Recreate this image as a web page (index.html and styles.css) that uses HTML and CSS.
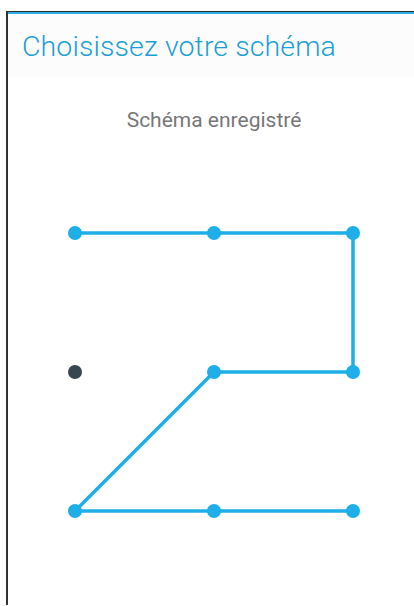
FILE: index.html
```html
<!DOCTYPE html>
<html lang="fr">
<head>
    <meta charset="UTF-8">
    <title>Choisissez votre schéma</title>
    <link rel="stylesheet" href="styles.css">
</head>
<body>
    <div class="frame">
        <header class="top-bar">
            <h1>Choisissez votre schéma</h1>
        </header>

        <main class="content">
            <p class="status">Schéma enregistré</p>

            <!-- 3x3 pattern grid, 139px between dots -->
            <svg class="pattern" width="306" height="306" viewBox="0 0 306 306">
                <polyline points="14,14 153,14 292,14 292,153 153,153 14,292 153,292 292,292"
                          fill="none" stroke="#1eaee8" stroke-width="3.5" stroke-linejoin="miter"/>
                <g fill="#1eaee8">
                    <circle cx="14" cy="14" r="7"/>
                    <circle cx="153" cy="14" r="7"/>
                    <circle cx="292" cy="14" r="7"/>
                    <circle cx="153" cy="153" r="7"/>
                    <circle cx="292" cy="153" r="7"/>
                    <circle cx="14" cy="292" r="7"/>
                    <circle cx="153" cy="292" r="7"/>
                    <circle cx="292" cy="292" r="7"/>
                </g>
                <circle cx="14" cy="153" r="7" fill="#37474f"/>
            </svg>
        </main>
    </div>
</body>
</html>
```

FILE: styles.css
```css
/* Reset */
html, body {
    margin: 0;
    padding: 0;
    background: #ffffff;
    font-family: Roboto, "Noto Sans", sans-serif;
}

/* Outer frame with the dark edges */
.frame {
    margin: 11px 0 0 6px;
    border-top: 1px solid #2b2b2b;
    border-left: 2px solid #333333;
    min-height: 594px;
    box-sizing: border-box;
}

/* Title bar */
.top-bar {
    border-top: 2px solid #2aaee3;
    background-color: #fcfcfc;
    height: 64px;
    padding-left: 14px;
    display: flex;
    align-items: center;
}

.top-bar h1 {
    margin: 0;
    font-size: 28.5px;
    font-weight: 300;
    color: #1b9fd4;
    letter-spacing: 0.1px;
}

/* Main area */
.content {
    display: flex;
    flex-direction: column;
    align-items: center;
    padding-left: 6px;
}

.status {
    margin: 30px 0 0;
    font-size: 21px;
    line-height: 24px;
    color: #777777;
}

.pattern {
    display: block;
    margin-top: 87px;
}
```
